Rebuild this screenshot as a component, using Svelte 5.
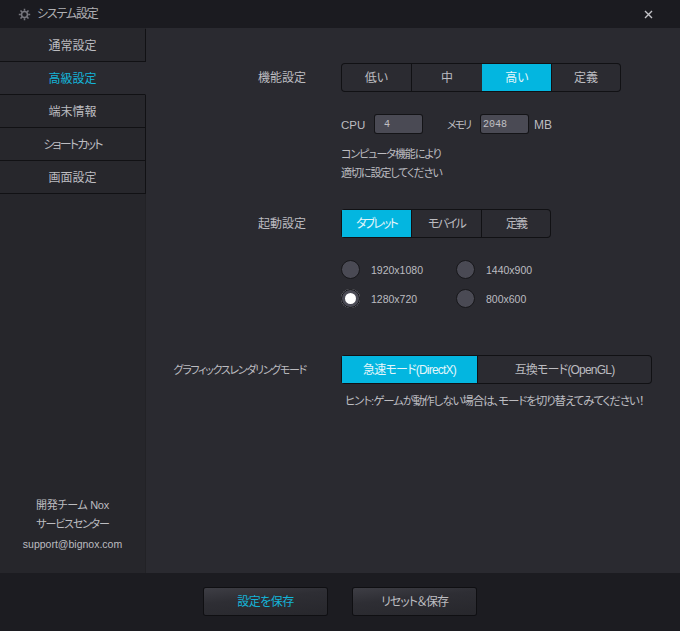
<script>
  const navItems = ['通常設定', '高級設定', '端末情報', 'ショートカット', '画面設定'];
  const perfOptions = ['低い', '中', '高い', '定義'];
  const bootOptions = ['タブレット', 'モバイル', '定義'];
  const resolutions = ['1920x1080', '1440x900', '1280x720', '800x600'];
  const modes = ['急速モード(DirectX)', '互換モード(OpenGL)'];

  let activeNav = $state('高級設定');
  let perf = $state('高い');
  let boot = $state('タブレット');
  let resolution = $state('1280x720');
  let mode = $state(modes[0]);
</script>

<div class="window">
  <header class="titlebar">
    <svg class="gear" width="13" height="13" viewBox="0 0 13 13">
      <circle cx="6.5" cy="6.5" r="3" fill="none" stroke="#77777e" stroke-width="1.6" />
      <path d="M6.5 .8v2M6.5 10.2v2M.8 6.5h2M10.2 6.5h2M2.5 2.5l1.4 1.4M9.1 9.1l1.4 1.4M2.5 10.5l1.4-1.4M9.1 3.9l1.4-1.4" stroke="#77777e" stroke-width="1.5" />
    </svg>
    <span class="title">システム設定</span>
    <svg class="close" width="9" height="9" viewBox="0 0 9 9">
      <path d="M1 1l7 7M8 1l-7 7" stroke="#c4c4c8" stroke-width="1.4" />
    </svg>
  </header>

  <div class="body">
    <aside class="sidebar">
      <nav>
        {#each navItems as item}
          <button
            class="nav-item"
            class:active={activeNav === item}
            class:kana={item === 'ショートカット'}
            onclick={() => (activeNav = item)}
          >{item}</button>
        {/each}
      </nav>
      <div class="support">
        <div class="team">開発チーム Nox</div>
        <div class="center">サービスセンター</div>
        <div class="mail">support@bignox.com</div>
      </div>
    </aside>

    <main class="content">
      <section class="row perf">
        <div class="label">機能設定</div>
        <div class="segments">
          {#each perfOptions as opt}
            <button class="seg" class:on={perf === opt} onclick={() => (perf = opt)}>{opt}</button>
          {/each}
        </div>
      </section>

      <section class="row specs">
        <div class="label"></div>
        <div class="spec-fields">
          <span class="cpu-label">CPU</span>
          <input class="num cpu" value="4" />
          <span class="mem-label">メモリ</span>
          <input class="num mem" value="2048" />
          <span>MB</span>
        </div>
      </section>

      <section class="row note">
        <div class="label"></div>
        <p>コンピュータ機能により<br />適切に設定してください</p>
      </section>

      <section class="row boot">
        <div class="label">起動設定</div>
        <div class="segments kana-segs">
          {#each bootOptions as opt}
            <button class="seg" class:on={boot === opt} onclick={() => (boot = opt)}>{opt}</button>
          {/each}
        </div>
      </section>

      <section class="row res">
        <div class="label"></div>
        <div class="radios">
          {#each resolutions as r}
            <button class="radio" onclick={() => (resolution = r)}>
              <span class="dot" class:checked={resolution === r}></span>
              <span>{r}</span>
            </button>
          {/each}
        </div>
      </section>

      <section class="row render">
        <div class="label long">グラフィックスレンダリングモード</div>
        <div class="segments modes">
          {#each modes as m, i}
            <button class="seg" class:first={i === 0} class:on={mode === m} onclick={() => (mode = m)}>{m}</button>
          {/each}
        </div>
      </section>

      <section class="row hint">
        <div class="label"></div>
        <p>ヒント:ゲームが動作しない場合は、モードを切り替えてみてください！</p>
      </section>
    </main>
  </div>

  <footer class="footer">
    <button class="action primary">設定を保存</button>
    <button class="action reset">リセット＆保存</button>
  </footer>
</div>

<style>
  :global(body) {
    margin: 0;
    background: #1c1c21;
  }

  .window {
    width: 680px;
    height: 631px;
    display: flex;
    flex-direction: column;
    color: #bcbcc0;
    font: 12px/16px "Liberation Sans", "Noto Sans CJK JP", sans-serif;
    font-feature-settings: "palt";
    background: #2a2a30;
  }

  button {
    font: inherit;
    font-feature-settings: inherit;
    color: inherit;
    border: 0;
    background: none;
    padding: 0;
    cursor: pointer;
  }

  .titlebar {
    height: 28px;
    flex: none;
    display: flex;
    align-items: center;
    padding: 0 27px 0 18px;
    background: #1b1b20;
    color: #b0b0b4;
  }

  .title {
    margin-left: 6px;
    letter-spacing: -1.2px;
  }

  .close {
    margin-left: auto;
  }

  .body {
    flex: 1;
    display: flex;
    min-height: 0;
  }

  .sidebar {
    width: 145px;
    flex: none;
    display: flex;
    flex-direction: column;
    justify-content: space-between;
    background: #26262b;
    border-right: 1px solid #222226;
  }

  nav {
    display: flex;
    flex-direction: column;
    padding-top: 1px;
    background: #27272c;
  }

  .nav-item {
    height: 33px;
    box-sizing: border-box;
    width: 146px;
    margin-right: -1px;
    padding-top: 2px;
    border-bottom: 1px solid #111114;
    border-right: 1px solid #111114;
    background: #27272c;
  }

  .nav-item.kana {
    letter-spacing: -1.8px;
  }

  .nav-item.active {
    color: #14b4d8;
    background: #2a2a30;
    border-right-color: #2a2a30;
  }

  .support {
    padding-bottom: 19px;
    text-align: center;
    line-height: 19.5px;
    font-size: 11px;
  }

  .team {
    letter-spacing: -0.3px;
  }

  .center {
    letter-spacing: -1.2px;
  }

  .mail {
    font-size: 10.5px;
  }

  .content {
    flex: 1;
    padding: 36px 28px 0 0;
  }

  .row {
    display: grid;
    grid-template-columns: 160px 1fr;
    column-gap: 36px;
    align-items: center;
  }

  .label {
    text-align: right;
    white-space: nowrap;
  }

  .label.long {
    font-size: 11px;
    letter-spacing: -1.3px;
  }

  .segments {
    display: flex;
    width: fit-content;
    height: 27px;
    border-radius: 3px;
    box-shadow: 0 0 0 1px #111114;
    background: #2b2b31;
  }

  .seg {
    width: 69px;
    height: 27px;
    border-left: 1px solid #111114;
  }

  .perf .seg:nth-child(2) {
    width: 71px;
  }

  .boot .seg:nth-child(2) {
    width: 70px;
  }

  .seg:first-child {
    border-left: 0;
  }

  .seg.on {
    background: #03b6e0;
    color: #e4f6fb;
    border-left-color: #03b6e0;
  }

  .kana-segs .seg {
    letter-spacing: -1.9px;
  }

  .modes .seg {
    width: 174px;
    letter-spacing: -0.8px;
  }

  .modes .seg.first {
    width: 135px;
  }

  .specs {
    margin-top: 24px;
    height: 18px;
  }

  .spec-fields {
    display: flex;
    align-items: center;
  }

  .spec-fields span {
    padding-top: 2px;
  }

  .cpu-label {
    width: 34px;
    margin-left: -1px;
    font-size: 11.5px;
  }

  .mem-label {
    width: 34px;
    margin-left: 25px;
    font-size: 11px;
    letter-spacing: -2px;
  }

  .num {
    width: 47px;
    height: 18px;
    box-sizing: border-box;
    border: 0;
    border-radius: 2px;
    background: #4a4a54;
    box-shadow: 0 0 0 1px #141417;
    color: #c0c0c4;
    font: 10px "Liberation Mono", monospace;
    outline: none;
    padding: 0 2px;
  }

  .cpu {
    padding-left: 9px;
  }

  .mem {
    margin-right: 6px;
  }

  .note {
    margin-top: 12px;
  }

  p {
    margin: 0;
  }

  .note p {
    margin-left: -1px;
    font-size: 11px;
    line-height: 19px;
    letter-spacing: -1.05px;
  }

  .boot {
    margin-top: 27px;
  }

  .res {
    margin-top: 23px;
  }

  .radios {
    display: grid;
    grid-template-columns: 115px 115px;
    grid-auto-rows: 19px;
    row-gap: 10px;
    width: fit-content;
    margin-left: -1px;
  }

  .radio {
    display: flex;
    align-items: center;
    gap: 11px;
    font-size: 10.5px;
  }

  .dot {
    width: 19px;
    height: 19px;
    box-sizing: border-box;
    border-radius: 50%;
    background: #4a4a54;
    border: 1px solid #17171a;
  }

  .dot.checked {
    background: #fff;
    border: 0;
    box-shadow: inset 0 0 0 4px #4a4a54;
    outline: 1px solid #17171a;
    outline-offset: -1px;
  }

  .render {
    margin-top: 48px;
  }

  .hint {
    margin-top: 10px;
  }

  .hint p {
    margin-left: 3px;
    white-space: nowrap;
    font-size: 11.5px;
    letter-spacing: -1.1px;
  }

  .footer {
    height: 58px;
    flex: none;
    display: flex;
    gap: 26px;
    padding: 15px 0 0 204px;
    box-sizing: border-box;
    background: #1c1c21;
  }

  .action {
    width: 123px;
    height: 27px;
    border-radius: 2px;
    background: linear-gradient(174deg, #3e3e45 0, #2e2e34 40%, #27272c 100%);
    box-shadow: 0 0 0 1px #0f0f12;
  }

  .action.primary {
    color: #14b4d8;
    letter-spacing: -0.5px;
  }

  .action.reset {
    letter-spacing: -1px;
  }
</style>
